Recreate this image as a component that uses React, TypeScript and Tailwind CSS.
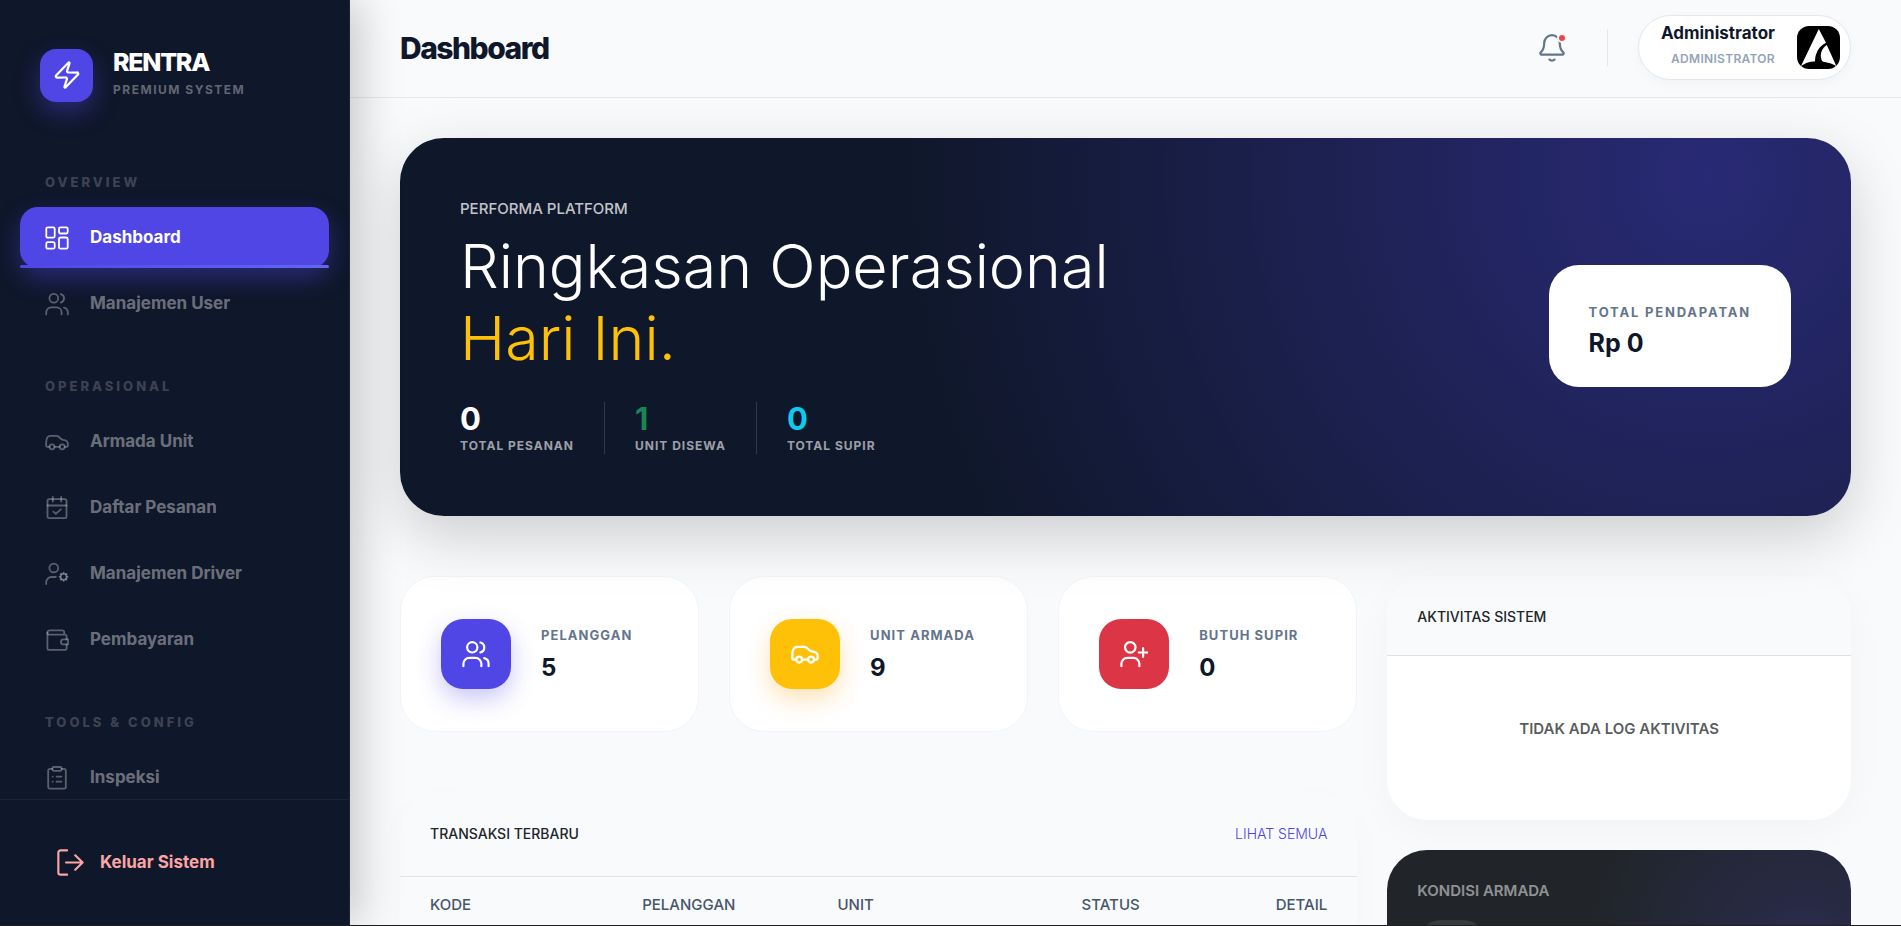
import type { ReactNode } from 'react';
import { Zap } from 'lucide-react';
import clsx from 'clsx';

type IconProps = { className?: string; strokeWidth?: number };

function Icon({ className, strokeWidth = 1.8, children }: IconProps & { children: ReactNode }) {
  return (
    <svg
      viewBox="0 0 24 24"
      className={clsx('shrink-0', className)}
      fill="none"
      stroke="currentColor"
      strokeWidth={strokeWidth}
      strokeLinecap="round"
      strokeLinejoin="round"
      aria-hidden="true"
    >
      {children}
    </svg>
  );
}

const DashboardIcon = (p: IconProps) => (
  <Icon {...p}>
    <rect x="1.3" y="1.3" width="8.4" height="10.4" rx="1.5" />
    <rect x="14" y="1.3" width="8.7" height="6.2" rx="1.5" />
    <rect x="14" y="11.5" width="8.7" height="11.2" rx="1.5" />
    <rect x="1.3" y="16.2" width="8.4" height="6.5" rx="1.5" />
  </Icon>
);

const UsersIcon = (p: IconProps) => (
  <Icon {...p}>
    <circle cx="8.8" cy="6.3" r="4.4" />
    <path d="M1.2 22.4v-2a5 5 0 0 1 5-5h5.4a5 5 0 0 1 5 5v2" />
    <path d="M15.8 2.1a4.4 4.4 0 0 1 0 8.5" />
    <path d="M19 15.6a5 5 0 0 1 3.8 4.8v2" />
  </Icon>
);

const CarIcon = (p: IconProps) => (
  <Icon {...p}>
    <path d="M4.4 16.8H2.2a1 1 0 0 1-1-1v-3.4C1.2 8.6 2.6 5.8 5.5 5.8h6.2c2.6 0 3.2 3.6 6.2 4 3.2.4 4.9 1.3 4.9 3.4v2.6a1 1 0 0 1-1 1h-2" />
    <path d="M9.6 16.8h5" />
    <circle cx="7" cy="16.8" r="2.5" />
    <circle cx="17.2" cy="16.8" r="2.5" />
  </Icon>
);

const CalendarIcon = (p: IconProps) => (
  <Icon {...p}>
    <rect x="2.5" y="3.2" width="19" height="19" rx="1.6" />
    <path d="M2.5 9.5h19M7.8.9v4.6M16.2.9v4.6M8.4 15.7l2.4 2.2 5-4.6" />
  </Icon>
);

const UserCogIcon = (p: IconProps) => (
  <Icon {...p}>
    <circle cx="8.8" cy="6" r="4.4" />
    <path d="M1.2 22v-1.8a5.2 5.2 0 0 1 5.2-5.2h4.4" />
    <circle cx="18.6" cy="14.8" r="3.1" />
    <path d="M18.6 10.7v1M18.6 17.9v1M14.5 14.8h1M21.7 14.8h1M15.7 11.9l.7.7M20.8 17l.7.7M15.7 17.7l.7-.7M20.8 12.6l.7-.7" />
  </Icon>
);

const WalletIcon = (p: IconProps) => (
  <Icon {...p}>
    <path d="M2.4 4.6v15.6a1.6 1.6 0 0 0 1.6 1.6h16a1.6 1.6 0 0 0 1.6-1.6v-3.8" />
    <path d="M21.6 11.4V8.2a1.5 1.5 0 0 0-1.5-1.5H4.3a1.9 1.9 0 0 1-1.9-2 2.2 2.2 0 0 1 2.2-2.3h12.8a1.8 1.8 0 0 1 1.8 1.8v2.5" />
    <path d="M23 11.4h-4.6a2.5 2.5 0 0 0 0 5H23z" />
  </Icon>
);

const ClipboardIcon = (p: IconProps) => (
  <Icon {...p}>
    <path d="M7.4 2.9H4.8a1.6 1.6 0 0 0-1.6 1.6v16.6a1.6 1.6 0 0 0 1.6 1.6h14.4a1.6 1.6 0 0 0 1.6-1.6V4.5a1.6 1.6 0 0 0-1.6-1.6h-2.6" />
    <rect x="7.4" y="1" width="9.2" height="3.8" rx="1.2" />
    <path d="M7.6 10.6h.1M11.6 10.6h4.8M7.6 15.7h.1M11.6 15.7h4.8" />
  </Icon>
);

const LogoutIcon = (p: IconProps) => (
  <Icon {...p}>
    <path d="M9 1.2H3.2a2 2 0 0 0-2 2v17.6a2 2 0 0 0 2 2H9" />
    <path d="M8 12h14.8M16.2 5.6l6.6 6.4-6.6 6.4" />
  </Icon>
);

const UserPlusIcon = (p: IconProps) => (
  <Icon {...p}>
    <circle cx="8.8" cy="6.3" r="4.5" />
    <path d="M1.2 22.4v-2a5 5 0 0 1 5-5h5.4a5 5 0 0 1 5 5v2M19.8 7v7.4M16.1 10.7h7.4" />
  </Icon>
);

const sections = [
  {
    title: 'Overview',
    items: [
      { label: 'Dashboard', icon: DashboardIcon, active: true },
      { label: 'Manajemen User', icon: UsersIcon },
    ],
  },
  {
    title: 'Operasional',
    items: [
      { label: 'Armada Unit', icon: CarIcon },
      { label: 'Daftar Pesanan', icon: CalendarIcon },
      { label: 'Manajemen Driver', icon: UserCogIcon },
      { label: 'Pembayaran', icon: WalletIcon },
    ],
  },
  {
    title: 'Tools & Config',
    items: [{ label: 'Inspeksi', icon: ClipboardIcon }],
  },
];

const heroStats = [
  { value: 0, label: 'Total Pesanan', color: 'text-white' },
  { value: 1, label: 'Unit Disewa', color: 'text-[#198754]' },
  { value: 0, label: 'Total Supir', color: 'text-[#0dcaf0]' },
];

const cards = [
  { label: 'Pelanggan', value: 5, icon: UsersIcon, box: 'bg-[#4f46e5] shadow-[0_10px_25px_rgba(79,70,229,0.3)]' },
  { label: 'Unit Armada', value: 9, icon: CarIcon, box: 'bg-[#ffc107] shadow-[0_10px_25px_rgba(245,158,11,0.3)]' },
  { label: 'Butuh Supir', value: 0, icon: UserPlusIcon, box: 'bg-[#dc3545]' },
];

function Sidebar() {
  return (
    <aside className="relative z-20 flex w-[350px] shrink-0 flex-col border-r border-white/5 bg-[#0f172a] shadow-[10px_0_40px_rgba(0,0,0,0.2)]">
      <div className="flex items-center gap-5 px-10 pt-12">
        <div className="flex size-[53px] items-center justify-center rounded-2xl bg-[#4f46e5] text-white shadow-[0_10px_25px_rgba(79,70,229,0.4)]">
          <Zap size={30} strokeWidth={1.8} />
        </div>
        <div className="pb-[2px]">
          <div className="text-[25px] leading-7 font-extrabold tracking-tighter text-white">RENTRA</div>
          <div className="mt-1 text-xs leading-5 font-bold tracking-[1.5px] text-white/35 uppercase">Premium System</div>
        </div>
      </div>

      <nav className="mt-[69px] flex min-h-0 flex-1 flex-col gap-[41px] overflow-y-auto px-5 [scrollbar-width:none]">
        {sections.map(s => (
          <div key={s.title}>
            <h2 className="mb-[14px] pl-[25px] text-[13px] leading-[22px] font-extrabold tracking-[3px] text-white/20 uppercase">{s.title}</h2>
            <ul className="space-y-[5px]">
              {s.items.map(({ label, icon: NavIcon, active }) => (
                <li key={label}>
                  <a
                    href="#"
                    className={clsx(
                      'relative flex h-[61px] items-center gap-[21px] rounded-[18px] px-[25px] pt-px text-[17px] font-bold',
                      active ? 'bg-[#4f46e5] text-white shadow-[0_10px_25px_rgba(79,70,229,0.4)]' : 'text-white/40',
                    )}
                  >
                    <NavIcon className={clsx('size-6', !active && 'opacity-80')} />
                    {label}
                    {active && (
                      <span className="absolute inset-x-0 bottom-0 h-[3px] rounded-xs bg-linear-to-r from-[#4f46e5] to-[#6366f1]" />
                    )}
                  </a>
                </li>
              ))}
            </ul>
          </div>
        ))}
      </nav>

      <div className="border-t border-white/5 px-10 py-8">
        <button type="button" className="flex h-[61px] items-center gap-4 pl-[17px] text-[17px] font-bold text-[#fca5a5]">
          <LogoutIcon className="size-[27px]" strokeWidth={1.9} />
          Keluar Sistem
        </button>
      </div>
    </aside>
  );
}

function Topbar() {
  return (
    <header className="flex h-[98px] shrink-0 items-center justify-between border-b border-[#e2e8f0] px-[50px] pb-[2px]">
      <h1 className="text-3xl leading-10 font-extrabold tracking-tighter text-[#0f172a]">Dashboard</h1>
      <div className="flex items-center">
        <button type="button" aria-label="Notifikasi" className="relative text-[#64748b]">
          <svg viewBox="0 0 26 28" className="h-7 w-[26px]" fill="none" stroke="currentColor" strokeWidth="2.2" strokeLinecap="round" strokeLinejoin="round">
            <path d="M5.2 9a7.8 7.8 0 0 1 15.6 0c0 5.6 1.6 7.8 3.4 9.4.8.8.4 2.2-.8 2.2H2.6c-1.2 0-1.6-1.4-.8-2.2C3.6 16.8 5.2 14.6 5.2 9z" />
            <path d="M10.4 25.6c1.4 1.5 3.8 1.5 5.2 0" />
          </svg>
          <span className="absolute -top-px -right-[2px] size-[10px] rounded-full border-2 border-[#f8fafc] bg-[#ef4444]" />
        </button>
        <div className="mr-[30px] ml-[42px] h-[37px] w-px bg-[#e2e8f0]" />
        <button
          type="button"
          className="flex h-[65px] items-center gap-[22px] rounded-full border border-[#e2e8f0] bg-white pr-[10px] pl-[22px] text-right shadow-[0_4px_12px_rgba(0,0,0,0.03)]"
        >
          <span className="pb-[6px]">
            <span className="block text-[17px] leading-6 font-bold text-[#0f172a]">Administrator</span>
            <span className="mt-1 block text-xs leading-5 font-semibold tracking-wide text-[#94a3b8] uppercase">Administrator</span>
          </span>
          <svg viewBox="0 0 43 43" className="size-[43px] rounded-xl bg-black" aria-hidden="true">
            <path fill="#fff" d="M21.8 3 4 40c5-3.6 9-4.4 14-4.6.2-1-.2-3.4 1-7C20.8 23 24.4 19 29 16.8z" />
            <path fill="#fff" d="M29.8 19C25 22.4 22.6 27.5 24.4 33.5c.3 1 1 2 2 2.3 5 .8 8.8 2 12.9 4.2z" />
          </svg>
        </button>
      </div>
    </header>
  );
}

function Hero() {
  return (
    <section className="relative flex items-center justify-between rounded-[44px] bg-[#0f172a] bg-[radial-gradient(circle_at_90%_10%,rgba(79,70,229,0.4),transparent_60%)] px-[60px] pt-[60px] pb-[62px] shadow-[0_20px_60px_rgba(0,0,0,0.18)]">
      <div>
        <p className="text-[15px] leading-[22px] font-medium text-white/75 uppercase">Performa Platform</p>
        <h2 className="mt-[10px] text-[61px] leading-[72px] font-light text-white">
          Ringkasan Operasional
          <br />
          <span className="text-[#ffc107]">Hari Ini.</span>
        </h2>
        <dl className="mt-7 flex">
          {heroStats.map((s, i) => (
            <div key={s.label} className={clsx('flex flex-col-reverse gap-[2px]', i > 0 && 'ml-[30px] border-l border-white/15 pl-[30px]')}>
              <dt className="text-xs leading-4 font-bold tracking-[1px] text-white/60 uppercase">{s.label}</dt>
              <dd className={clsx('text-[31px] leading-[34px] font-bold', s.color)}>{s.value}</dd>
            </div>
          ))}
        </dl>
      </div>
      <div className="rounded-[30px] bg-white px-10 pt-[37px] pb-[29px]">
        <div className="text-[13px] leading-5 font-bold tracking-[0.14em] text-[#64748b] uppercase">Total Pendapatan</div>
        <div className="mt-[6px] text-[25px] leading-[30px] font-bold text-[#0f172a]">Rp 0</div>
      </div>
    </section>
  );
}

export default function App() {
  return (
    <div className="flex h-screen overflow-hidden border-b border-[#1f1f1f] bg-[#f8fafc] font-['Inter','Liberation_Sans',sans-serif] text-[#212529]">
      <Sidebar />
      <div className="flex min-w-0 flex-1 flex-col">
        <Topbar />
        <main className="min-h-0 flex-1 overflow-y-auto px-[50px] py-10 [scrollbar-width:none]">
          <Hero />
          <div className="mt-[60px] grid grid-cols-12 items-start gap-[30px]">
            <div className="col-span-8">
              <div className="grid grid-cols-3 gap-[30px]">
                {cards.map(({ label, value, icon: CardIcon, box }) => (
                  <div key={label} className="flex h-[156px] items-center gap-[30px] rounded-[35px] border border-[#f1f5f9] bg-white px-10">
                    <div className={clsx('flex size-[70px] shrink-0 items-center justify-center rounded-[22px] text-white', box)}>
                      <CardIcon className="size-7" strokeWidth={1.9} />
                    </div>
                    <div>
                      <div className="text-[13px] leading-5 font-bold tracking-[0.08em] text-[#64748b] uppercase">{label}</div>
                      <div className="mt-2 text-2xl leading-[30px] font-bold text-[#0f172a]">{value}</div>
                    </div>
                  </div>
                ))}
              </div>

              <section className="mt-[60px] overflow-hidden rounded-[40px] pb-12 shadow-[0_10px_40px_rgba(0,0,0,0.02)]">
                <div className="flex h-[85px] items-center justify-between border-b border-[#dee2e6] px-[30px] text-sm">
                  <h3 className="font-medium uppercase">Transaksi Terbaru</h3>
                  <a href="#" className="font-light text-[#4f46e5] uppercase">Lihat Semua</a>
                </div>
                <table className="w-full table-fixed text-left text-[15px] text-[#475569]">
                  <thead>
                    <tr className="h-14 uppercase">
                      <th className="w-[25.3%] pl-[30px] font-medium">Kode</th>
                      <th className="w-[20.4%] font-medium">Pelanggan</th>
                      <th className="w-[25.5%] font-medium">Unit</th>
                      <th className="font-medium">Status</th>
                      <th className="pr-[30px] text-right font-medium">Detail</th>
                    </tr>
                  </thead>
                </table>
              </section>
            </div>

            <div className="col-span-4 space-y-[30px]">
              <section className="overflow-hidden rounded-[40px] bg-white shadow-[0_10px_40px_rgba(0,0,0,0.03)]">
                <h3 className="flex h-20 items-center border-b border-[#dee2e6] bg-[#f8fafc] px-[30px] pt-[2px] text-sm font-medium uppercase">
                  Aktivitas Sistem
                </h3>
                <p className="flex h-[164px] items-center justify-center pb-[18px] text-[15px] font-semibold text-[#212529]/75 uppercase">
                  Tidak ada log aktivitas
                </p>
              </section>
              <section className="rounded-[40px] bg-[#212529] bg-[radial-gradient(circle_220px_at_90%_110px,rgba(79,70,229,0.2),transparent)] p-[30px]">
                <h3 className="text-[15px] leading-[22px] font-semibold text-white/50 uppercase">Kondisi Armada</h3>
                <div className="mt-[18px] size-[70px] rounded-[24px] bg-white/10" />
              </section>
            </div>
          </div>
        </main>
      </div>
    </div>
  );
}
